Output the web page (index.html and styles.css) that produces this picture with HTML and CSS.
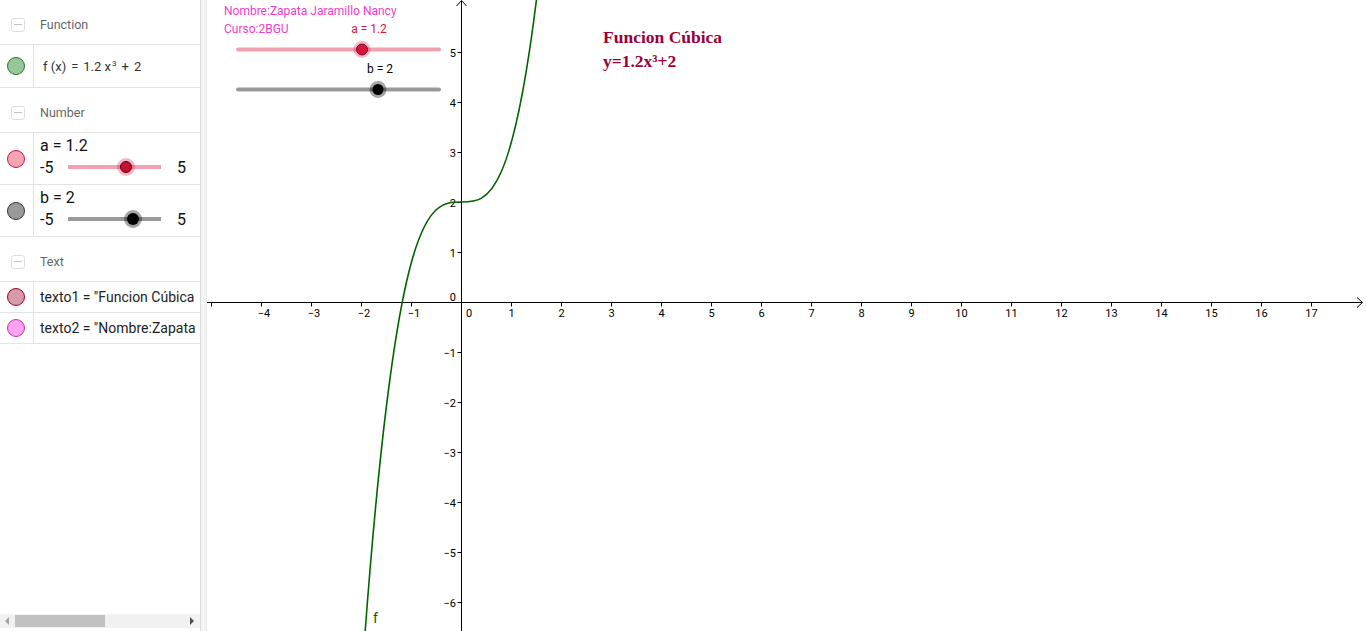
FILE: index.html
```html
<!DOCTYPE html>
<html>
<head>
<meta charset="utf-8">
<link rel="stylesheet" href="styles.css">
</head>
<body>
<div class="app">
  <div class="algebra">
    <div class="list">
      <div class="group"><span class="minus"><i></i></span><span class="gname">Function</span></div>
      <div class="row row-f">
        <div class="marble"><span class="dot dot-f"></span></div>
        <div class="content formula"><span class="fx">f (x)</span><span class="op">=</span><span>1.2 x<sup>3</sup></span><span class="op">+</span><span>2</span></div>
      </div>
      <div class="group"><span class="minus"><i></i></span><span class="gname">Number</span></div>
      <div class="row row-s">
        <div class="marble"><span class="dot dot-a"></span></div>
        <div class="content">
          <div class="sname">a = 1.2</div>
          <div class="srow">
            <span class="smin">-5</span>
            <div class="strack track-a"><span class="thumb thumb-a" style="left:62%"></span></div>
            <span class="smax">5</span>
          </div>
        </div>
      </div>
      <div class="row row-s">
        <div class="marble"><span class="dot dot-b"></span></div>
        <div class="content">
          <div class="sname">b = 2</div>
          <div class="srow">
            <span class="smin">-5</span>
            <div class="strack track-b"><span class="thumb thumb-b" style="left:70%"></span></div>
            <span class="smax">5</span>
          </div>
        </div>
      </div>
      <div class="group"><span class="minus"><i></i></span><span class="gname">Text</span></div>
      <div class="row row-t">
        <div class="marble"><span class="dot dot-t1"></span></div>
        <div class="content ttext">texto1 = "Funcion Cúbica</div>
      </div>
      <div class="row row-t">
        <div class="marble"><span class="dot dot-t2"></span></div>
        <div class="content ttext">texto2 = "Nombre:Zapata</div>
      </div>
    </div>
    <div class="hscroll">
      <span class="arr arr-l"></span>
      <span class="hthumb"></span>
      <span class="arr arr-r"></span>
    </div>
  </div>
  <div class="divider"></div>
  <div class="graphics">
    <svg class="canvas" viewBox="207 0 1159 631" width="1159" height="631" xmlns="http://www.w3.org/2000/svg">
      <g class="axes" stroke="#000" stroke-width="1" fill="none">
        <line x1="207" y1="302.5" x2="1362" y2="302.5"/>
        <polyline points="1357,297.5 1362.5,302.5 1357,307.5"/>
        <line x1="461.5" y1="631" x2="461.5" y2="1"/>
        <polyline points="456.5,6 461.5,0.5 466.5,6"/>
        <path d="M211.5 302.5v4M261.5 302.5v4M311.5 302.5v4M361.5 302.5v4M411.5 302.5v4M511.5 302.5v4M561.5 302.5v4M611.5 302.5v4M661.5 302.5v4M711.5 302.5v4M761.5 302.5v4M811.5 302.5v4M861.5 302.5v4M911.5 302.5v4M961.5 302.5v4M1011.5 302.5v4M1061.5 302.5v4M1111.5 302.5v4M1161.5 302.5v4M1211.5 302.5v4M1261.5 302.5v4M1311.5 302.5v4"/>
        <path d="M457.5 52.5h4M457.5 102.5h4M457.5 152.5h4M457.5 202.5h4M457.5 252.5h4M457.5 352.5h4M457.5 402.5h4M457.5 452.5h4M457.5 502.5h4M457.5 552.5h4M457.5 602.5h4"/>
      </g>
      <g class="xlab" text-anchor="middle">
        <text x="264" y="317">−4</text>
        <text x="314" y="317">−3</text>
        <text x="364" y="317">−2</text>
        <text x="414" y="317">−1</text>
        <text x="469" y="317">0</text>
        <text x="511.5" y="317">1</text>
        <text x="561.5" y="317">2</text>
        <text x="611.5" y="317">3</text>
        <text x="661.5" y="317">4</text>
        <text x="711.5" y="317">5</text>
        <text x="761.5" y="317">6</text>
        <text x="811.5" y="317">7</text>
        <text x="861.5" y="317">8</text>
        <text x="911.5" y="317">9</text>
        <text x="961.5" y="317">10</text>
        <text x="1011.5" y="317">11</text>
        <text x="1061.5" y="317">12</text>
        <text x="1111.5" y="317">13</text>
        <text x="1161.5" y="317">14</text>
        <text x="1211.5" y="317">15</text>
        <text x="1261.5" y="317">16</text>
        <text x="1311.5" y="317">17</text>
      </g>
      <g class="ylab" text-anchor="end">
        <text x="456" y="56.5">5</text>
        <text x="456" y="106.5">4</text>
        <text x="456" y="156.5">3</text>
        <text x="456" y="206.5">2</text>
        <text x="456" y="256.5">1</text>
        <text x="456" y="300.5">0</text>
        <text x="456" y="356.5">−1</text>
        <text x="456" y="406.5">−2</text>
        <text x="456" y="456.5">−3</text>
        <text x="456" y="506.5">−4</text>
        <text x="456" y="556.5">−5</text>
        <text x="456" y="606.5">−6</text>
      </g>
      <path class="curve" d="M361.5 682 C421.5 -182 481.5 509.2 541.5 -43.76" fill="none" stroke="#006400" stroke-width="1.6"/>
      <text class="flabel" x="373" y="623">f</text>

      <text class="ntext" x="224" y="15">Nombre:Zapata Jaramillo Nancy</text>
      <text class="ntext" x="224" y="33">Curso:2BGU</text>

      <line x1="238" y1="49.5" x2="439" y2="49.5" stroke="#f0a2b1" stroke-width="4" stroke-linecap="round"/>
      <circle cx="362" cy="49.5" r="8.5" fill="#dc143c" fill-opacity="0.3"/>
      <circle cx="362" cy="49.5" r="5.5" fill="#dc143c" stroke="#5a0018" stroke-width="0.8"/>
      <text class="slabel sa" x="369" y="33" text-anchor="middle">a = 1.2</text>

      <line x1="238" y1="89.5" x2="439" y2="89.5" stroke="#999" stroke-width="4" stroke-linecap="round"/>
      <circle cx="378" cy="89.5" r="8.5" fill="#000" fill-opacity="0.35"/>
      <circle cx="378" cy="89.5" r="5.5" fill="#000"/>
      <text class="slabel" x="380" y="73" text-anchor="middle">b = 2</text>

      <text class="title" x="603" y="43">Funcion Cúbica</text>
      <text class="title" x="603" y="67">y=1.2x³+2</text>
    </svg>
  </div>
</div>
</body>
</html>
```

FILE: styles.css
```css
html, body {
  margin: 0;
  padding: 0;
  width: 1366px;
  height: 631px;
  overflow: hidden;
  background: #fff;
  font-family: Roboto, "Noto Sans", sans-serif;
}

.app {
  display: flex;
  width: 1366px;
  height: 631px;
}

.algebra {
  width: 200px;
  height: 631px;
  display: flex;
  flex-direction: column;
  background: #fff;
}

.list {
  flex: 1;
  overflow: hidden;
}

.group {
  height: 45px;
  box-sizing: border-box;
  border-bottom: 1px solid #e3e3e3;
  display: flex;
  align-items: center;
  padding-left: 11px;
  padding-top: 5px;
}

.minus {
  width: 14px;
  height: 14px;
  box-sizing: border-box;
  border: 1px solid #dedede;
  border-radius: 3px;
  display: flex;
  align-items: center;
  justify-content: center;
  margin-right: 15px;
}

.minus i {
  display: block;
  width: 8px;
  height: 1px;
  background: #c4c4c4;
}

.gname {
  font-size: 12.5px;
  color: #666;
}

.row {
  display: flex;
  box-sizing: border-box;
  border-bottom: 1px solid #e3e3e3;
}

.row-f { height: 43px; }
.row-s { height: 52px; }
.row-t { height: 31px; }

.marble {
  width: 34px;
  flex: none;
  box-sizing: border-box;
  border-right: 1px solid #e3e3e3;
  display: flex;
  align-items: center;
  justify-content: center;
}

.dot {
  width: 18px;
  height: 18px;
  box-sizing: border-box;
  border-radius: 50%;
  border: 1px solid #000;
  margin-left: -1px;
}

.dot-f { background: #99c699; border-color: #1f7a1f; }
.dot-a { background: #f4a4b3; border-color: #d1143e; }
.dot-b { background: #999; border-color: #333; }
.dot-t1 { background: #d89aab; border-color: #99003a; }
.dot-t2 { background: #ffa3f0; border-color: #cc2fae; }

.content {
  flex: 1;
  min-width: 0;
  padding-left: 6px;
}

.formula {
  display: flex;
  align-items: center;
  padding-left: 9px;
  font-size: 13px;
  color: #333;
  white-space: pre;
}

.formula .op {
  margin: 0 5px;
}

.formula sup {
  font-size: 8px;
  position: relative;
  top: -5px;
  vertical-align: baseline;
  margin-left: 1px;
}

.sname {
  font-size: 16px;
  color: #111;
  line-height: 20px;
  margin-top: 3px;
}

.srow {
  display: flex;
  align-items: center;
  height: 22px;
  font-size: 16px;
  color: #111;
}

.smin {
  width: 28px;
}

.smax {
  margin-left: 16px;
}

.strack {
  position: relative;
  width: 93px;
  height: 4px;
}

.track-a { background: #f0a2b1; }
.track-b { background: #999; }

.thumb {
  position: absolute;
  top: 50%;
  width: 12px;
  height: 12px;
  margin-left: -6px;
  margin-top: -6px;
  border-radius: 50%;
  box-sizing: border-box;
}

.thumb-a {
  background: #c8102e;
  border: 1px solid #4a0012;
  box-shadow: 0 0 0 3px rgba(220, 20, 60, 0.3);
}

.thumb-b {
  background: #000;
  box-shadow: 0 0 0 3px rgba(0, 0, 0, 0.35);
}

.ttext {
  display: flex;
  align-items: center;
  font-size: 14px;
  color: #222;
  white-space: pre;
  overflow: hidden;
}

.hscroll {
  height: 14px;
  margin-bottom: 3px;
  background: #f1f1f1;
  display: flex;
  align-items: center;
  position: relative;
}

.hthumb {
  display: block;
  width: 90px;
  height: 12px;
  background: #c1c1c1;
  margin-left: 6px;
}

.arr {
  width: 0;
  height: 0;
  border-top: 4px solid transparent;
  border-bottom: 4px solid transparent;
}

.arr-l {
  border-right: 4px solid #a3a3a3;
  margin-left: 5px;
}

.arr-r {
  border-left: 4px solid #505050;
  margin-left: auto;
  margin-right: 6px;
}

.divider {
  width: 7px;
  flex: none;
  box-sizing: border-box;
  background: #f4f4f4;
  border-left: 1px solid #dcdcdc;
  border-right: 1px solid #e6e6e6;
}

.graphics {
  flex: 1;
  position: relative;
  overflow: hidden;
}

.canvas {
  display: block;
}

.xlab text, .ylab text {
  font-family: Roboto, "Noto Sans", sans-serif;
  font-size: 11px;
  fill: #000;
}

.flabel {
  font-family: Roboto, sans-serif;
  font-size: 14px;
  fill: #006400;
}

.ntext {
  font-family: Roboto, sans-serif;
  font-size: 12px;
  fill: #f03cc8;
}

.slabel {
  font-family: Roboto, sans-serif;
  font-size: 12px;
  fill: #000;
}

.slabel.sa {
  fill: #dc143c;
}

.title {
  font-family: "Liberation Serif", serif;
  font-weight: bold;
  font-size: 17.5px;
  fill: #99003a;
}
```
